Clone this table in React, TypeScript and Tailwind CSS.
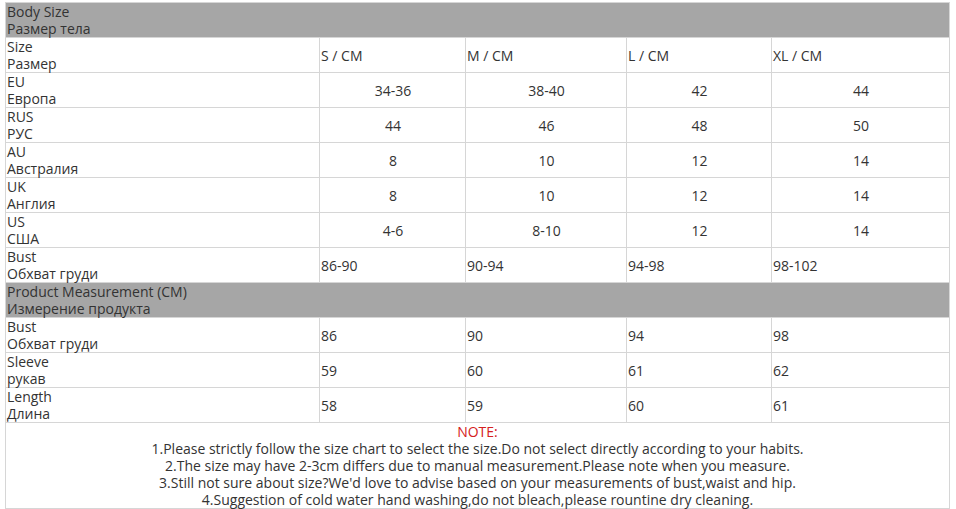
import React from 'react';

const sizes = ['S / CM', 'M / CM', 'L / CM', 'XL / CM'];

const bodyRows: { en: string; ru: string; values: string[]; center: boolean }[] = [
  { en: 'EU', ru: 'Европа', values: ['34-36', '38-40', '42', '44'], center: true },
  { en: 'RUS', ru: 'РУС', values: ['44', '46', '48', '50'], center: true },
  { en: 'AU', ru: 'Австралия', values: ['8', '10', '12', '14'], center: true },
  { en: 'UK', ru: 'Англия', values: ['8', '10', '12', '14'], center: true },
  { en: 'US', ru: 'США', values: ['4-6', '8-10', '12', '14'], center: true },
  { en: 'Bust', ru: 'Обхват груди', values: ['86-90', '90-94', '94-98', '98-102'], center: false },
];

const productRows = [
  { en: 'Bust', ru: 'Обхват груди', values: ['86', '90', '94', '98'] },
  { en: 'Sleeve', ru: 'рукав', values: ['59', '60', '61', '62'] },
  { en: 'Length', ru: 'Длина', values: ['58', '59', '60', '61'] },
];

const notes = [
  '1.Please strictly follow the size chart to select the size.Do not select directly according to your habits.',
  '2.The size may have 2-3cm differs due to manual measurement.Please note when you measure.',
  '3.Still not sure about size?We\'d love to advise based on your measurements of bust,waist and hip.',
  '4.Suggestion of cold water hand washing,do not bleach,please rountine dry cleaning.',
];

const cell = 'border border-[#d6d6d6] h-[34px] p-0 pl-px align-middle';

function Label({ en, ru }: { en: string; ru: string }) {
  return (
    <td className={cell}>
      <div>{en}</div>
      <div>{ru}</div>
    </td>
  );
}

export default function App() {
  return (
    <div className="bg-white w-[956px] h-[509px] pt-[2px] pl-[5px] font-['Open_Sans',sans-serif] text-[14px] leading-[17px] text-[#333]">
      <table className="table-fixed border-collapse w-[944px]">
        <colgroup>
          <col className="w-[314px]" />
          <col className="w-[146px]" />
          <col className="w-[161px]" />
          <col className="w-[145px]" />
          <col className="w-[178px]" />
        </colgroup>
        <tbody>
          <tr className="bg-[#a6a6a6]">
            <td colSpan={5} className={cell}>
              <div>Body Size</div>
              <div>Размер тела</div>
            </td>
          </tr>
          <tr>
            <Label en="Size" ru="Размер" />
            {sizes.map(s => (
              <td key={s} className={cell}>{s}</td>
            ))}
          </tr>
          {bodyRows.map(r => (
            <tr key={r.en + r.ru}>
              <Label en={r.en} ru={r.ru} />
              {r.values.map((v, i) => (
                <td key={i} className={`${cell} ${r.center ? 'text-center' : ''}`}>{v}</td>
              ))}
            </tr>
          ))}
          <tr className="bg-[#a6a6a6]">
            <td colSpan={5} className={cell}>
              <div>Product Measurement (CM)</div>
              <div>Измерение продукта</div>
            </td>
          </tr>
          {productRows.map(r => (
            <tr key={r.en}>
              <Label en={r.en} ru={r.ru} />
              {r.values.map((v, i) => (
                <td key={i} className={cell}>{v}</td>
              ))}
            </tr>
          ))}
          <tr>
            <td colSpan={5} className="border border-[#d6d6d6] p-0 text-center">
              <div className="text-[#d42020]">NOTE:</div>
              {notes.map(n => (
                <div key={n}>{n}</div>
              ))}
            </td>
          </tr>
        </tbody>
      </table>
    </div>
  );
}
